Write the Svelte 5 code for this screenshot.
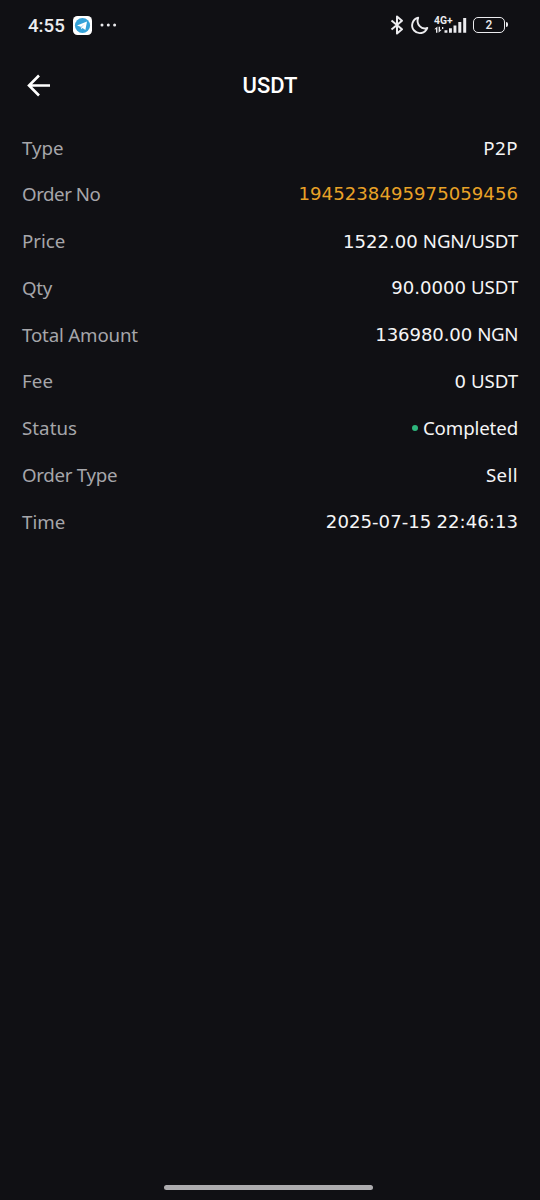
<script>
  // tracking is letter spacing in px
  const rows = [
    { label: 'Type', tracking: 0, parts: [{ text: 'P2P', tracking: 0.5 }] },
    { label: 'Order No', tracking: -0.45, kind: 'link', parts: [{ text: '1945238495975059456', digits: true, tracking: 0.04 }] },
    { label: 'Price', tracking: 0, parts: [{ text: '1522.00', digits: true, tracking: 0 }, { text: 'NGN/USDT', tracking: -0.15 }] },
    { label: 'Qty', tracking: -0.3, parts: [{ text: '90.0000', digits: true, tracking: 0 }, { text: 'USDT', tracking: -0.1 }] },
    { label: 'Total Amount', tracking: -0.16, parts: [{ text: '136980.00', digits: true, tracking: -0.1 }, { text: 'NGN', tracking: -0.4 }] },
    { label: 'Fee', tracking: 0.1, parts: [{ text: '0', digits: true, tracking: 0 }, { text: 'USDT', tracking: -0.1 }] },
    { label: 'Status', tracking: 0.05, kind: 'status', parts: [{ text: 'Completed', tracking: -0.13 }] },
    { label: 'Order Type', tracking: -0.3, parts: [{ text: 'Sell', tracking: 0.4 }] },
    { label: 'Time', tracking: 0, parts: [{ text: '2025-07-15', digits: true, tracking: 0.04 }, { text: '22:46:13', digits: true, tracking: 0.04 }] }
  ];
</script>

<main>
  <div class="status-bar">
    <span class="clock">4:55</span>
    <svg class="telegram" width="19" height="19" viewBox="0 0 19 19">
      <rect width="19" height="19" rx="4.5" fill="#fff" />
      <circle cx="9.5" cy="9.5" r="7.6" fill="#35a2d8" />
      <path d="M4 9.4 14 5.4 12.4 13.9 9.6 11.9 8.2 13.3 7.7 10.7Z" fill="#fff" />
      <path d="M7.8 10.7 12 7.7 8.9 11.1 8.2 13.2Z" fill="#a9d5ec" />
    </svg>
    <svg class="dots" width="17" height="4" viewBox="0 0 17 4" fill="#ececef">
      <circle cx="2" cy="2" r="1.5" />
      <circle cx="8.3" cy="2" r="1.5" />
      <circle cx="14.6" cy="2" r="1.5" />
    </svg>

    <div class="system-icons">
      <svg width="14" height="20" viewBox="0 0 14 20" fill="none" stroke="#ececef" stroke-width="2" stroke-linejoin="round">
        <path d="M1.5 5.5 12 14.3 7 18.5V1.5L12 5.7 1.5 14.5" />
      </svg>
      <svg class="moon" width="19" height="19" viewBox="0 0 19 19" fill="none" stroke="#ececef" stroke-width="1.9" stroke-linejoin="round">
        <path d="M8.2 1.7A7.8 7.8 0 1 0 17.3 11.9C11.6 14.2 5.6 8.4 8.2 1.7Z" />
      </svg>
      <div class="signal">
        <span>4G+</span>
        <svg width="33" height="18" viewBox="0 0 33 18" fill="#ececef">
          <path d="M2 16.8V13.2H.3L3.4 10.6V16.8ZM4.6 10.8H6V13.8H7.7L4.6 16.8Z" />
          <path d="M8 11h1.3v2H8zM10.5 14.2h2.9v2.6h-2.9zM15 12.2h2.9v4.6H15zM19.5 9.6h2.9v7.2h-2.9zM24.3 6h3v10.8h-3zM29.2 2h3v14.8h-3z" />
        </svg>
      </div>
      <div class="battery"><span>2</span></div>
    </div>
  </div>

  <header>
    <svg width="24" height="24" viewBox="0 0 24 24" fill="none" stroke="#fff" stroke-width="2.6">
      <path d="M24 12.5H3M13 2.5 3 12.5 13 22.5" />
    </svg>
    <h1>USDT</h1>
  </header>

  <dl>
    {#each rows as row}
      <div class="row">
        <dt style="letter-spacing: {row.tracking}px">{row.label}</dt>
        <dd class={row.kind}>
          {#if row.kind === 'status'}
            <i class="dot"></i>
          {/if}
          {#each row.parts as part}
            <span class:digits={part.digits} style="letter-spacing: {part.tracking}px">{part.text}</span>
          {/each}
        </dd>
      </div>
    {/each}
  </dl>

  <div class="home-bar"></div>
</main>

<style>
  :global(body) {
    margin: 0;
    background: #101014;
  }

  main {
    display: flex;
    flex-direction: column;
    box-sizing: border-box;
    height: 1200px;
    background: #101014;
    color: #f5f5f6;
    font-family: "Noto Sans", sans-serif;
  }

  .status-bar {
    display: flex;
    align-items: center;
    height: 50px;
    padding: 0 35px 0 28px;
    font-family: Roboto, sans-serif;
    color: #ececef;
  }

  .clock {
    width: 37px;
    padding-top: 1px;
    font-size: 18.7px;
    font-weight: 500;
  }

  .telegram {
    margin-left: 8px;
  }

  .dots {
    margin-left: 8px;
  }

  .system-icons {
    display: flex;
    align-items: center;
    margin-left: auto;
  }

  .moon {
    margin-left: 6px;
  }

  .signal {
    position: relative;
    height: 18px;
    margin-left: 5px;
  }

  .signal span {
    position: absolute;
    top: -1px;
    left: 0;
    font-size: 10.3px;
    font-weight: 700;
    line-height: 11px;
  }

  .battery {
    position: relative;
    box-sizing: border-box;
    width: 32px;
    height: 16px;
    margin-left: 6px;
    border: 1.5px solid #ececef;
    border-radius: 5px;
    font-size: 12px;
    font-weight: 500;
    line-height: 15px;
    text-align: center;
  }

  .battery::after {
    content: "";
    position: absolute;
    top: 4px;
    right: -4px;
    width: 2px;
    height: 5px;
    border-radius: 0 2px 2px 0;
    background: #ececef;
  }

  header {
    display: grid;
    grid-template-columns: 24px 1fr 24px;
    align-items: center;
    height: 70px;
    padding: 0 26px;
  }

  h1 {
    margin: 0;
    font-family: Roboto, sans-serif;
    font-size: 22px;
    font-weight: 500;
    text-align: center;
    color: #fff;
  }

  dl {
    flex: 1;
    margin: 0;
    padding: 4.2px 22px 0;
  }

  .row {
    display: flex;
    align-items: center;
    justify-content: space-between;
    height: 46.75px;
    font-size: 18.7px;
    line-height: 26px;
  }

  dt {
    color: #a6a6aa;
  }

  dd {
    display: flex;
    align-items: baseline;
    gap: 5px;
    margin: 0;
  }

  .digits {
    font-family: "DejaVu Sans", sans-serif;
    font-size: 18.1px;
  }

  .link {
    color: #e9a227;
  }

  .dot {
    align-self: center;
    width: 6px;
    height: 6px;
    border-radius: 50%;
    background: #2eb67d;
  }

  .home-bar {
    width: 209px;
    height: 5px;
    margin: 0 auto 10px;
    border-radius: 3px;
    background: #adacaf;
    transform: translateX(-2px);
  }
</style>
